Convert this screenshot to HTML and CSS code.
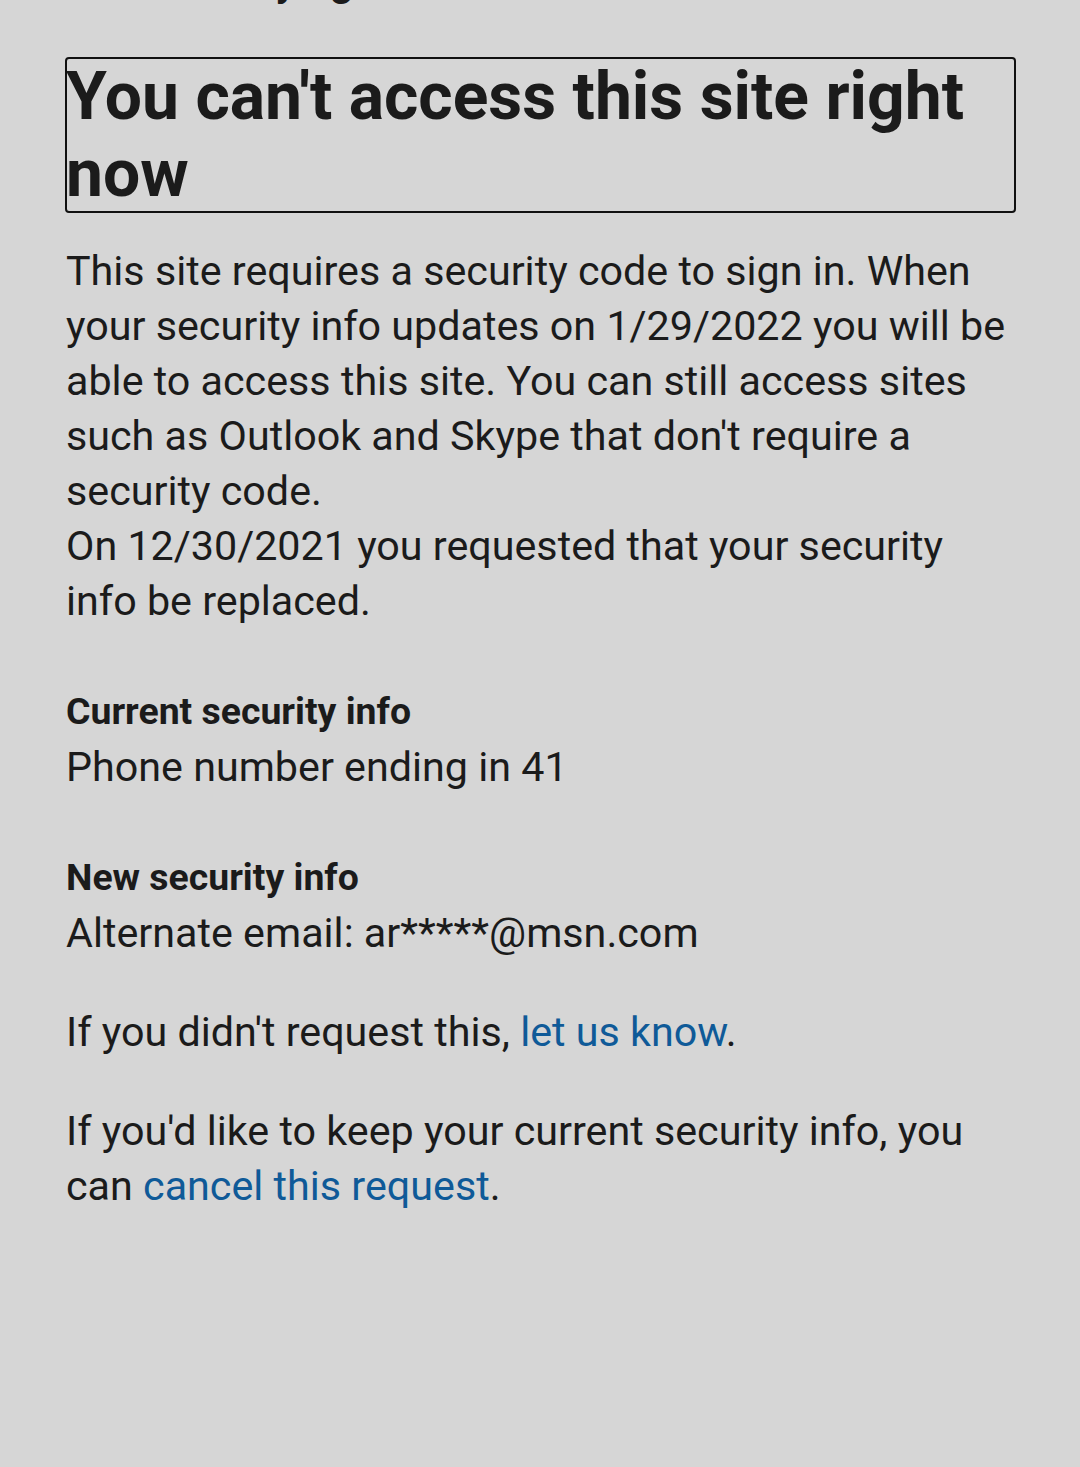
FILE: index.html
```html
<!DOCTYPE html>
<html lang="en">
<head>
<meta charset="utf-8">
<title>You can't access this site right now</title>
<link rel="stylesheet" href="styles.css">
</head>
<body>
<main class="page">
  <div class="top-cut">Verifying</div>
  <h1 class="title">You can't access this site right now</h1>
  <p class="intro">This site requires a security code to sign in. When your security info updates on 1/29/2022 you will be able to access this site. You can still access sites such as Outlook and Skype that don't require a security code.<br>On 12/30/2021 you requested that your security info be replaced.</p>
  <section class="info">
    <div class="label">Current security info</div>
    <div class="value">Phone number ending in 41</div>
  </section>
  <section class="info">
    <div class="label">New security info</div>
    <div class="value">Alternate email: ar*****@msn.com</div>
  </section>
  <p class="note">If you didn't request this, <a class="link" href="#">let us know</a>.</p>
  <p class="note">If you'd like to keep your current security info, you can <a class="link" href="#">cancel this request</a>.</p>
</main>
</body>
</html>
```

FILE: styles.css
```css
html, body {
  margin: 0;
  padding: 0;
  background: #d6d6d6;
}
body {
  font-family: Roboto, "Noto Sans", sans-serif;
  color: #1b1b1b;
  overflow: hidden;
}
.page {
  padding: 0 65px 0 66px;
}
.top-cut {
  font-size: 41px;
  font-weight: 700;
  line-height: 48px;
  margin-top: -42px;
  text-indent: 121px;
  height: 48px;
  margin-bottom: 52px;
}
.title {
  margin: 0;
  font-size: 66px;
  font-weight: 700;
  line-height: 77px;
  outline: 2px solid #111;
  outline-offset: -1px;
  border-radius: 3px;
}
.intro {
  margin: 32px 0 0;
  font-size: 41.25px;
  line-height: 55px;
}
.info {
  margin-top: 55px;
}
.label {
  font-size: 37.4px;
  font-weight: 700;
  line-height: 55px;
}
.value {
  font-size: 41.25px;
  line-height: 55px;
  margin-top: 1px;
}
.note {
  margin: 44px 0 0;
  font-size: 41.25px;
  line-height: 55px;
}
.link {
  color: #0f5a98;
  text-decoration: none;
}
```
